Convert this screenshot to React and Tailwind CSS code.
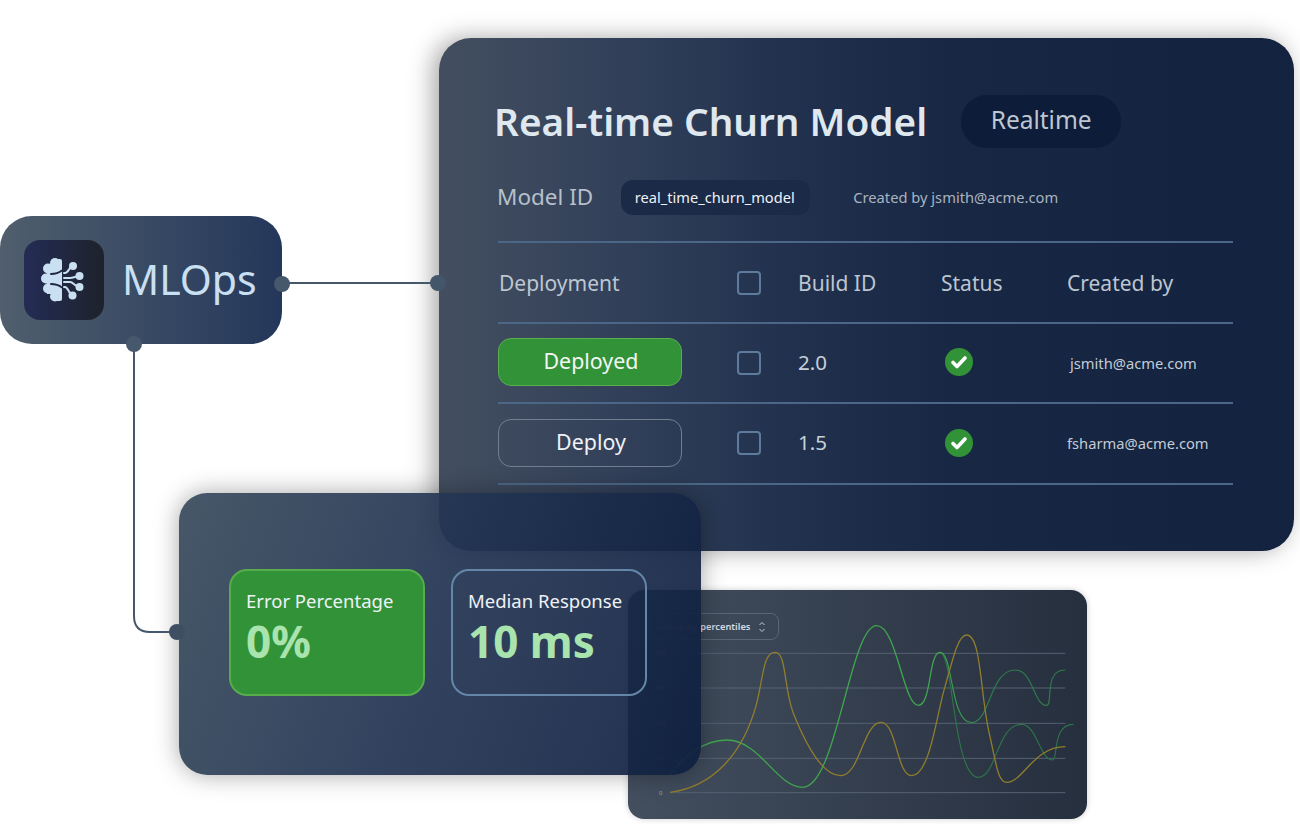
const FONT = "font-['Noto_Sans','Open_Sans',sans-serif]"

function BrainIcon() {
  return (
    <svg width="60" height="56" viewBox="0 0 60 56" fill="none">
      <g fill="#c9e0f2">
        <circle cx="21" cy="11" r="5" />
        <circle cx="14" cy="16.500" r="5" />
        <circle cx="12" cy="26.500" r="5" />
        <circle cx="14" cy="36.500" r="5" />
        <circle cx="21" cy="44.500" r="5" />
        <path d="M13 14h14v28H13z" />
        <rect x="21" y="7" width="7" height="42" rx="2" />
        <circle cx="39" cy="14" r="4" />
        <circle cx="45.500" cy="24" r="4" />
        <circle cx="45.500" cy="35" r="4" />
        <circle cx="38.500" cy="43.500" r="4" />
      </g>
      <g stroke="#1f2745" strokeWidth="2" strokeLinecap="round">
        <path d="M17 22c4 0 7-.5 11-3.500" />
        <path d="M17 32c4 0 7 .5 11 3.500" />
      </g>
      <g stroke="#c9e0f2" strokeWidth="2" strokeLinecap="round">
        <path d="M30 21h1c2 0 3-2 5-5" />
        <path d="M30 26h6c3 0 4-1 7-1.500" />
        <path d="M30 30h6c3 0 4 3 7 4" />
        <path d="M30 35h1c2 0 3 3 5 6" />
      </g>
    </svg>
  )
}

function CheckBox() {
  return <span className="block w-6 h-6 rounded-[4px] border-2 border-[#5d7b9c]" />
}

function StatusOk() {
  return (
    <svg width="28" height="28" viewBox="0 0 28 28">
      <circle cx="14" cy="14" r="14" fill="#329238" />
      <path d="M8 14.500l4 4 8-8.500" fill="none" stroke="#fff" strokeWidth="3.600" strokeLinecap="round" strokeLinejoin="round" />
    </svg>
  )
}

function Row({ button, build, email, emailClass }) {
  return (
    <div className="grid grid-cols-[239px_61px_143px_126px_1fr] items-center h-[80.5px] border-t-2 border-[#4b6788]">
      <div className="-mt-[1px]">{button}</div>
      <div><CheckBox /></div>
      <div className="text-[20.5px] text-[#c7d0da] -mt-[1px]">{build}</div>
      <div className="pl-1 -mt-[1px]"><StatusOk /></div>
      <div className={`text-[14.7px] text-[#c3ccd6] ${emailClass}`}>{email}</div>
    </div>
  )
}

function ChartPanel() {
  const rows = [
    { label: '200', y: 220 },
    { label: '150', y: 324 },
    { label: '100', y: 430 },
    { label: '50', y: 535 },
    { label: '0', y: 638 },
  ]
  return (
    <div className="absolute left-[628px] top-[590px] w-[459px] h-[229px] rounded-[16px] bg-gradient-to-r from-[#434f5f] to-[#262f3e] shadow-[0_0_6px_rgba(0,0,0,0.2)] overflow-hidden">
      <div className="absolute left-[21px] top-[23px] w-[130px] h-[27px] rounded-[8px] border border-[#5a6676] flex items-center pl-[7px] text-[9.3px] font-semibold text-[#d5dbe3]">
        <span className="font-normal text-[#7f8a99] mr-[3px]">Group by</span>
        <span>percentiles</span>
        <svg className="ml-[7px]" width="10" height="14" viewBox="0 0 10 14" fill="none" stroke="#c5ccd6" strokeWidth="1">
          <path d="M2.500 5l2.500-2.500L7.500 5" />
          <path d="M2.500 9l2.500 2.500L7.500 9" />
        </svg>
      </div>
      <svg className="absolute inset-0" width="459" height="229" viewBox="24 30 1377 687" fill="none">
        <defs>
          <linearGradient id="fadeGreen" gradientUnits="userSpaceOnUse" x1="960" y1="0" x2="1120" y2="0">
            <stop offset="0" stopColor="#3fa64e" />
            <stop offset="1" stopColor="#2f7a4c" />
          </linearGradient>
        </defs>
        {rows.map((r) => (
          <g key={r.label}>
            <line x1="150" x2="1336" y1={r.y} y2={r.y} stroke="#566272" strokeWidth="3" />
            <text x="122" y={r.y + 6} textAnchor="middle" fontSize="18" fill="#98a3b2" fontFamily="Noto Sans">{r.label}</text>
          </g>
        ))}
        <path d="M960 217C1000 217 1000 592 1075 592C1130 592 1130 433 1205 433C1250 433 1260 540 1298 540C1315 540 1295 433 1360 433" stroke="#2d7348" strokeWidth="3.500" />
        <path d="M150 585C190 530 250 480 320 480C420 480 470 622 548 622C650 622 690 137 770 137C830 137 850 376 895 376C935 376 925 217 960 217" stroke="#3fa64e" strokeWidth="4" />
        <path d="M960 217C1000 217 990 428 1055 428C1110 428 1110 270 1185 270C1240 270 1240 376 1280 376C1300 376 1270 268 1336 270" stroke="url(#fadeGreen)" strokeWidth="3.500" />
        <path d="M150 637C280 620 370 520 410 370C430 290 430 217 465 217C500 217 490 320 520 400C560 500 610 587 662 587C720 587 730 427 783 427C830 427 830 587 875 587C930 587 950 400 975 320C1000 230 1015 165 1040 165C1085 165 1080 350 1110 470C1130 560 1135 607 1160 607C1210 607 1240 500 1336 500" stroke="#8f7d2d" strokeWidth="4" />
      </svg>
    </div>
  )
}

function StatCard({ title, value, className }) {
  return (
    <div className={`w-[196px] h-[127px] rounded-[18px] border-2 pl-[15px] pt-[17px] ${className}`}>
      <div className="text-[18.5px] leading-[25px] text-[#eef2f6]">{title}</div>
      <div className="text-[44px] leading-[50px] font-bold text-[#a9e4ae] mt-[3px]">{value}</div>
    </div>
  )
}

export default function App() {
  return (
    <div className={`relative w-[1300px] h-[824px] bg-white overflow-hidden ${FONT}`}>
      {/* model card */}
      <div className="absolute left-[439px] top-[38px] w-[855px] h-[513px] rounded-[32px] bg-[linear-gradient(90deg,#434f60_0%,#313f59_22%,#22324e_40%,#182743_60%,#13223e_100%)] shadow-[-6px_0_24px_rgba(0,0,0,0.35)] pl-[59px] pr-[61px] pt-[57px]">
        <div className="flex items-center h-[53px]">
          <h1 className="text-[38.7px] font-semibold text-[#dfe7ef] ml-[-4px]">Real-time Churn Model</h1>
          <span className="ml-[34px] w-[160px] h-[53px] rounded-[26px] bg-[#0d1c39] flex items-center justify-center text-[24.5px] text-[#bcc7d2] pb-[2px]">Realtime</span>
        </div>
        <div className="flex items-center h-[35px] mt-[32px]">
          <span className="text-[22.5px] text-[#b6c0cb] ml-[-1px] pb-[2px]">Model ID</span>
          <span className="ml-[28px] w-[189px] h-[35px] rounded-[12px] bg-[#1b2a47] flex items-center justify-center text-[14.6px] text-[#eef2f6] pr-[2px]">real_time_churn_model</span>
          <span className="ml-[43px] text-[14.7px] text-[#a9b4c0]">Created by jsmith@acme.com</span>
        </div>
        <div className="mt-[26px] grid grid-cols-[239px_61px_143px_126px_1fr] items-center h-[80.5px] pt-[2px] border-t-2 border-[#4b6788] text-[21px] text-[#bcc6d1]">
          <div className="pl-[1px]">Deployment</div>
          <div><CheckBox /></div>
          <div>Build ID</div>
          <div>Status</div>
          <div>Created by</div>
        </div>
        <Row
          button={<span className="flex items-center justify-center w-[184px] h-[48px] rounded-[13px] bg-[#329238] border border-[#5aad50] text-[21.4px] text-[#f2f6f2] pb-[2px] pl-[2px]">Deployed</span>}
          build="2.0"
          email="jsmith@acme.com"
          emailClass="pl-[3px]"
        />
        <Row
          button={<span className="flex items-center justify-center w-[184px] h-[48px] rounded-[13px] border border-[#727f90] text-[21.4px] text-[#eef2f6] pb-[2px] pl-[2px]">Deploy</span>}
          build="1.5"
          email="fsharma@acme.com"
        />
        <div className="border-t-2 border-[#4b6788]" />
      </div>

      <ChartPanel />

      {/* metrics card, sits over the model card and chart */}
      <div className="absolute left-[179px] top-[493px] w-[522px] h-[282px] rounded-[28px] bg-[linear-gradient(110deg,rgba(55,73,91,0.92)_0%,rgba(34,52,82,0.92)_45%,rgba(14,30,63,0.92)_100%)] shadow-[0_0_24px_rgba(0,0,0,0.35)] flex gap-[26px] pl-[50px] pt-[76px]">
        <StatCard title="Error Percentage" value="0%" className="bg-[#329238] border-[#55ad4c]" />
        <StatCard title="Median Response" value="10 ms" className="border-[#6486a8]" />
      </div>

      {/* MLOps node */}
      <div className="absolute left-0 top-[216px] w-[282px] h-[128px] rounded-[32px] bg-gradient-to-r from-[#505e6d] to-[#24375a] flex items-center pl-[24px]">
        <div className="w-[80px] h-[80px] rounded-[16px] bg-gradient-to-r from-[#242c55] to-[#1e222c] flex items-center justify-center">
          <BrainIcon />
        </div>
        <span className="ml-[18px] text-[41px] text-[#c9e0f2]">MLOps</span>
      </div>

      {/* connectors */}
      <svg className="absolute inset-0 pointer-events-none" width="1300" height="824" fill="none">
        <path d="M282 283H438" stroke="#45576b" strokeWidth="2" />
        <path d="M134 344V616Q134 632 150 632H177" stroke="#45576b" strokeWidth="2" />
        <circle cx="282" cy="284" r="8" fill="#46586b" />
        <circle cx="438" cy="283" r="8" fill="#44566a" />
        <circle cx="134" cy="344" r="8" fill="#46586b" />
        <circle cx="177" cy="632" r="8" fill="#3f4f63" />
      </svg>
    </div>
  )
}
